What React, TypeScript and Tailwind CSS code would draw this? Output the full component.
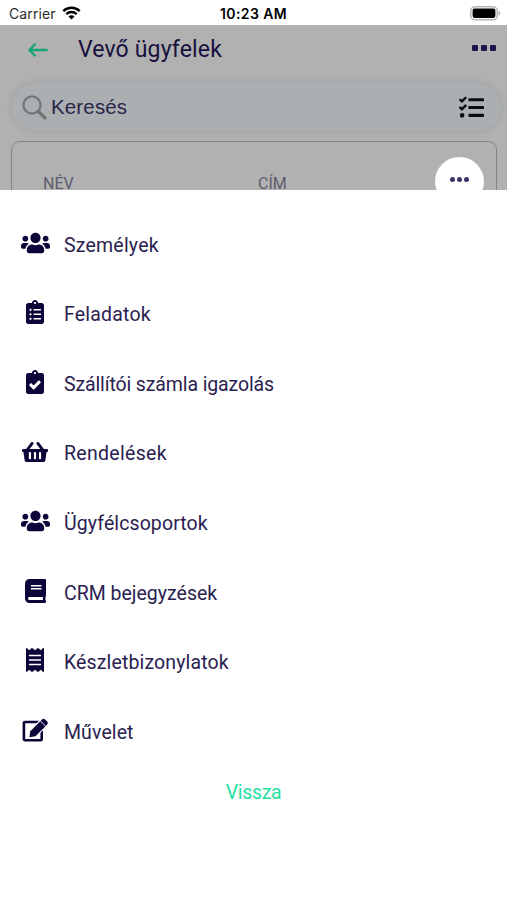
import React from 'react';
import {
  FaBook,
  FaClipboardCheck,
  FaClipboardList,
  FaReceipt,
  FaShoppingBasket,
  FaTasks,
  FaUsers,
} from 'react-icons/fa';

const EditIcon: React.FC<{ className?: string }> = ({ className }) => (
  <svg className={className} viewBox="0 0 27 24" fill="none">
    <rect x="1.9" y="4" width="17.8" height="18.2" rx="1" stroke="currentColor" strokeWidth="2.6" />
    <path d="M7.4 19.2l.9-6L20 1.4a2.2 2.2 0 0 1 3 0l2.2 2.2a2.2 2.2 0 0 1 0 3L13.5 18.3z" fill="currentColor" stroke="#fff" strokeWidth="2.2" paintOrder="stroke" />
    <path d="M18.4 3l5.3 5.3" stroke="#fff" strokeWidth="0.9" />
  </svg>
);

interface MenuItem {
  label: string;
  icon: React.ComponentType<{ className?: string }>;
  iconClass: string;
  labelClass: string;
}

const menuItems: MenuItem[] = [
  { label: 'Személyek', icon: FaUsers, iconClass: 'w-[29px] h-6', labelClass: 'tracking-[0.2px]' },
  { label: 'Feladatok', icon: FaClipboardList, iconClass: 'w-[18px] h-6', labelClass: 'tracking-[0.2px]' },
  { label: 'Szállítói számla igazolás', icon: FaClipboardCheck, iconClass: 'w-[18px] h-6', labelClass: 'tracking-[-0.12px]' },
  { label: 'Rendelések', icon: FaShoppingBasket, iconClass: 'w-[26px] h-6', labelClass: 'tracking-[0.3px]' },
  { label: 'Ügyfélcsoportok', icon: FaUsers, iconClass: 'w-[29px] h-6', labelClass: 'tracking-[0.1px]' },
  { label: 'CRM bejegyzések', icon: FaBook, iconClass: 'w-[21px] h-6', labelClass: 'tracking-[0px]' },
  { label: 'Készletbizonylatok', icon: FaReceipt, iconClass: 'w-[18px] h-6', labelClass: 'tracking-[0.13px]' },
  { label: 'Művelet', icon: EditIcon, iconClass: 'w-[27px] h-6', labelClass: 'tracking-[0.1px]' },
];

const StatusBar: React.FC = () => (
  <div className="relative flex h-[25px] items-center justify-between bg-white pl-[9px] pr-[6px] pt-[2px] font-['Inter',sans-serif] text-black">
    <div className="flex items-center">
      <span className="text-[14px] leading-none tracking-[0.1px] text-[#2c2c2c]">Carrier</span>
      <svg className="mb-[2px] ml-[6px] h-[14px] w-[19px]" viewBox="0 0 19 14" fill="none" stroke="currentColor" strokeWidth="2.4">
        <path d="M1.3 5.1a11.7 11.7 0 0 1 16.4 0" />
        <path d="M4.3 8.2a7.4 7.4 0 0 1 10.4 0" />
        <path d="M9.5 13.5L6.5 10.5a4.2 4.2 0 0 1 6 0z" fill="currentColor" stroke="none" />
      </svg>
    </div>
    <span className="absolute left-1/2 -translate-x-1/2 whitespace-nowrap text-[14px] leading-none font-semibold tracking-[0.4px]">10:23 AM</span>
    <svg className="h-[15px] w-[31px]" viewBox="0 0 31 15">
      <rect x="0.8" y="0.8" width="26.4" height="13" rx="4" fill="#fff" stroke="#b5b5b5" strokeWidth="1.5" />
      <rect x="2.6" y="2.6" width="22.8" height="9.4" rx="2.2" fill="#000" />
      <path d="M28.6 5v4.6c1-.3 1.6-1.2 1.6-2.3s-.6-2-1.6-2.3z" fill="#aaa" />
    </svg>
  </div>
);

const Header: React.FC = () => (
  <header className="flex h-[49px] items-center pl-[27px] pr-[11px] text-[#18103e]">
    <svg className="h-[18px] w-[21px] text-[#16a577]" viewBox="0 0 21 18" fill="none" stroke="currentColor" strokeWidth="2.3">
      <path d="M20.6 9H2.5M8.6 2.8L2.4 9L8.6 15.2" />
    </svg>
    <h1 className="ml-[30px] flex-1 font-['Roboto',sans-serif] text-[23px] leading-7 tracking-[0.15px]">Vevő ügyfelek</h1>
    <div className="mb-[3px] flex gap-[3px]">
      <span className="size-[6px] rounded-[1px] bg-[#20134f]" />
      <span className="size-[6px] rounded-[1px] bg-[#20134f]" />
      <span className="size-[6px] rounded-[1px] bg-[#20134f]" />
    </div>
  </header>
);

const SearchBar: React.FC = () => (
  <div className="ml-[12px] mr-[6px] mt-[9px] flex h-[48px] items-center rounded-full bg-[#abafb2] pl-[10px] pr-[17px] shadow-[0_0_5px_2px_rgba(80,80,80,0.12)]">
    <svg className="size-[25px] text-[#747474]" viewBox="0 0 25 25" fill="none" stroke="currentColor">
      <circle cx="10" cy="10" r="8.6" strokeWidth="2.2" />
      <path d="M16.3 16.3l6.6 6.6" strokeWidth="3.4" strokeLinecap="round" />
    </svg>
    <span className="ml-[4px] flex-1 font-['Liberation_Sans',sans-serif] text-[20.5px] tracking-[0.15px] text-[#2a2548]">Keresés</span>
    <FaTasks className="mt-px size-[25px] text-[#0c0c0f]" />
  </div>
);

const ResultCard: React.FC = () => (
  <div className="relative ml-[11px] mr-[10px] mt-[10px] flex h-[49px] rounded-t-[9px] border border-b-0 border-[#858787] pt-[33px] font-['Roboto',sans-serif] text-[16px] leading-[18px] text-[#5d5c6d]">
    <span className="w-[215px] pl-[31px]">NÉV</span>
    <span className="pl-[31px]">CÍM</span>
    <div className="absolute right-[12px] top-[15px] flex size-[49px] justify-center gap-[2px] rounded-full bg-white pt-[20px]">
      <span className="size-[5px] rounded-full bg-[#3c3264]" />
      <span className="size-[5px] rounded-full bg-[#3c3264]" />
      <span className="size-[5px] rounded-full bg-[#3c3264]" />
    </div>
  </div>
);

const ActionSheet: React.FC = () => (
  <div className="relative h-[710px] bg-white pt-[20.5px] font-['Roboto',sans-serif] text-[19.5px]">
    <ul>
      {menuItems.map(({ label, icon: Icon, iconClass, labelClass }) => (
        <li key={label} className="flex h-[69.6px] items-center">
          <span className="mb-[5px] ml-[20px] flex w-[30px] justify-center text-[#0e0439]">
            <Icon className={iconClass} />
          </span>
          <span className={`ml-[14px] whitespace-nowrap text-[#2a2150] ${labelClass}`}>{label}</span>
        </li>
      ))}
    </ul>
    <button className="mx-auto block pt-[12px] leading-7 tracking-[-0.35px] text-[#1fe0a2]">Vissza</button>
  </div>
);

const App: React.FC = () => (
  <div className="h-[900px] w-[507px] overflow-hidden bg-white">
    <StatusBar />
    <div className="h-[165px] bg-[#b1b1b1]">
      <Header />
      <SearchBar />
      <ResultCard />
    </div>
    <ActionSheet />
  </div>
);

export default App;
